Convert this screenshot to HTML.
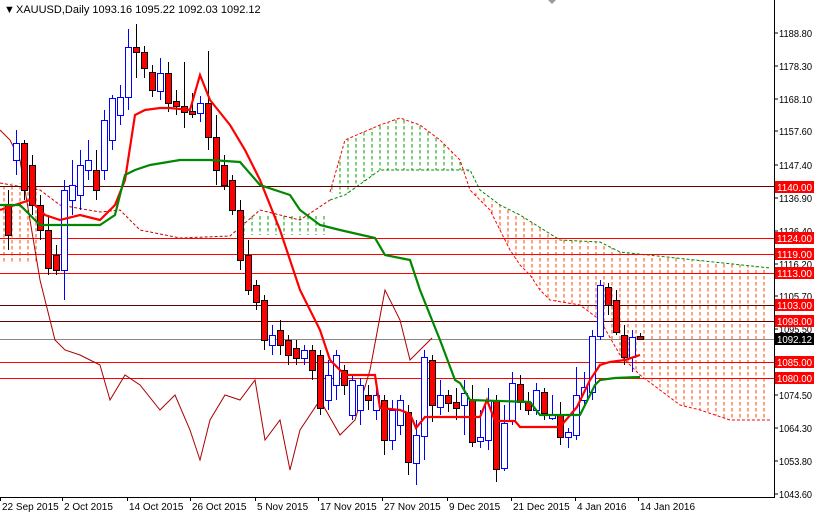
<!DOCTYPE html>
<html><head><meta charset="utf-8"><style>
html,body{margin:0;padding:0;background:#fff;}
svg{display:block;font-family:"Liberation Sans",sans-serif;}
</style></head><body>
<svg id="s" width="814" height="516" viewBox="0 0 814 516" xmlns="http://www.w3.org/2000/svg">
<defs>
<pattern id="po" width="8" height="6" patternUnits="userSpaceOnUse"><line x1="4" y1="0" x2="4" y2="3.5" stroke="#ff4500" stroke-width="1"/></pattern>
<pattern id="pg" width="8" height="6" patternUnits="userSpaceOnUse"><line x1="4" y1="0" x2="4" y2="3.5" stroke="#00a000" stroke-width="1"/></pattern>
</defs>
<rect width="814" height="516" fill="#fff"/>
<polygon fill="url(#po)" points="0,183 40,183 40,262 0,262"/>
<polygon fill="url(#pg)" points="330,192 345,140 380,125 400,118 420,125 440,140 460,160 470,175 470,170 380,170 345,195"/>
<polygon fill="url(#pg)" points="240,215 330,215 330,235 240,235"/>
<polygon fill="url(#po)" points="470,190 500,205 520,215 560,240 600,242 620,252 770,268 770,420 730,420 700,410 680,405 660,390 640,375 620,355 600,320 580,305 550,300 540,290 530,275 520,265 510,250 500,230 490,210"/>
<polyline fill="none" stroke="#f00" stroke-width="1" stroke-dasharray="3,2" points="330,192 345,140 380,125 400,118 420,125 440,140 460,160 470,190 490,210 500,230 510,250 520,265 530,275 540,290 550,300 580,305 600,320 620,355 640,375 660,390 680,405 700,410 730,420 770,420"/>
<polyline fill="none" stroke="#080" stroke-width="1" stroke-dasharray="3,2" points="330,200 345,195 380,170 470,170 480,190 500,205 520,215 560,240 600,242 620,252 770,268"/>
<polyline fill="none" stroke="#c00" stroke-width="1" stroke-dasharray="3,2" points="0,183 40,190 60,205 100,212 120,210 140,230 180,238 230,236 260,210 300,220 330,200"/>
<g stroke="#f00" stroke-width="1">
<line x1="0" y1="186.5" x2="774" y2="186.5" stroke="#600"/>
<line x1="0" y1="238.5" x2="774" y2="238.5"/>
<line x1="0" y1="254.5" x2="774" y2="254.5"/>
<line x1="0" y1="273.5" x2="774" y2="273.5"/>
<line x1="0" y1="305.5" x2="774" y2="305.5" stroke="#600"/>
<line x1="0" y1="321.5" x2="774" y2="321.5" stroke="#600"/>
<line x1="0" y1="362.5" x2="774" y2="362.5"/>
<line x1="0" y1="378.5" x2="774" y2="378.5"/>
</g>
<line x1="0" y1="339.5" x2="774" y2="339.5" stroke="#888"/>
<polyline fill="none" stroke="#a00" stroke-width="1" points="0,130 10,140 20,160 30,220 40,280 55,340 65,350 80,355 100,365 110,400 125,375 140,385 160,410 175,395 190,430 200,460 210,420 225,395 240,400 255,380 265,440 280,420 290,470 300,430 320,400 340,435 355,420 370,370 385,290 400,320 410,360 425,345 432,338"/>
<g id="candles"></g>
<polyline fill="none" stroke="#f00" stroke-width="2.2" points="0,210 30,200 45,215 60,220 80,215 100,220 115,205 125,180 135,115 145,110 160,108 170,108 190,110 200,75 210,100 230,125 245,150 260,180 280,230 290,260 300,290 320,330 330,360 345,375 375,375 380,408 400,410 410,414 416,428 425,417 480,417 487,400 495,421 515,421 520,427 560,427 577,407 590,380 600,365 610,362 625,360 640,355"/>
<polyline fill="none" stroke="#080" stroke-width="2.2" points="0,205 20,205 40,225 100,225 115,215 125,175 135,170 150,165 180,160 210,160 240,162 260,185 290,195 300,210 320,225 340,230 375,238 385,255 410,260 420,290 440,340 455,380 460,383 470,400 530,402 540,415 580,415 595,385 600,380 615,378 640,377"/>
<line x1="774.5" y1="0" x2="774.5" y2="497" stroke="#000"/>
<line x1="0" y1="497.5" x2="775" y2="497.5" stroke="#000"/>
<g font-size="10" fill="#000" id="ax"></g>
<g id="lbl" font-size="10"></g>
<text x="4" y="13" font-size="11">▼</text>
<text x="16" y="13" font-size="11" fill="#000">XAUUSD,Daily  1093.16 1095.22 1092.03 1092.12</text>
<polygon points="548,0 556,0 552,4" fill="#999"/>
</svg>
<script>
var C=[[8,'r',205,235,190,250],[16,'b',143,160,130,175],[24,'r',143,190,140,200],[32,'r',165,205,155,215],[40,'r',205,230,195,240],[48,'r',230,268,215,275],[56,'r',255,270,245,275],[64,'b',190,270,180,300],[72,'b',185,200,160,215],[80,'b',165,195,150,210],[88,'b',160,170,140,180],[96,'r',170,190,150,200],[104,'b',120,170,110,180],[112,'b',98,140,95,150],[120,'b',97,115,85,125],[128,'b',47,97,29,110],[136,'r',47,52,24,78],[144,'r',52,68,46,78],[152,'r',72,90,65,97],[160,'b',73,91,58,100],[168,'r',73,103,62,112],[176,'r',101,106,90,115],[184,'r',106,112,62,128],[192,'r',111,114,93,118],[200,'b',103,113,96,122],[208,'r',103,137,51,150],[216,'r',137,170,115,185],[224,'r',165,185,155,190],[232,'r',180,210,175,215],[240,'r',210,260,200,270],[248,'r',255,290,240,295],[256,'r',285,302,280,310],[264,'r',300,340,295,350],[272,'b',335,345,325,355],[280,'r',330,345,320,355],[288,'r',340,355,335,365],[296,'r',348,358,340,365],[304,'b',350,358,345,365],[312,'r',350,370,345,380],[320,'r',355,408,350,415],[328,'b',375,400,360,410],[336,'b',355,385,350,400],[344,'r',370,385,365,395],[352,'b',380,415,375,420],[360,'b',385,410,378,425],[368,'r',395,400,385,410],[376,'b',395,410,385,420],[384,'r',400,440,395,455],[392,'b',410,440,400,450],[400,'b',400,425,395,435],[408,'r',412,462,405,475],[416,'b',435,463,420,485],[424,'b',357,436,350,460],[432,'r',360,405,355,422],[440,'b',395,407,380,415],[448,'r',395,403,390,412],[456,'r',402,408,388,420],[464,'b',393,405,380,435],[472,'r',400,442,385,447],[480,'b',437,441,410,448],[488,'b',400,440,388,450],[496,'r',400,469,395,482],[504,'b',423,468,405,471],[512,'b',383,420,372,425],[520,'r',384,402,375,410],[528,'r',402,410,392,415],[536,'b',390,410,383,415],[544,'r',392,413,388,420],[552,'b',415,418,395,420],[560,'r',415,437,402,445],[568,'b',432,437,428,448],[576,'b',395,435,367,440],[584,'b',387,400,372,405],[592,'b',336,392,330,400],[600,'b',285,336,280,340],[608,'r',287,305,283,315],[616,'r',300,332,290,335],[624,'r',335,357,325,365],[632,'b',337,357,330,372],[640,'r',336,339,333,340]];
var g=document.getElementById('candles'),h='';
C.forEach(function(c){var x=c[0],b=c[1]=='b',col=b?'#00f':'#000';
h+='<line x1="'+(x+.5)+'" y1="'+c[4]+'" x2="'+(x+.5)+'" y2="'+c[5]+'" stroke="'+col+'"/>';
h+='<rect x="'+(x-2.5)+'" y="'+(c[2]+.5)+'" width="6" height="'+Math.max(1,c[3]-c[2])+'" fill="'+(b?'#fff':'#f00')+'" stroke="'+col+'"/>';});
g.innerHTML=h;
var T=[['1188.80',33],['1178.30',66],['1168.10',99],['1157.60',131],['1147.40',165],['1136.90',198],['1126.40',231],['1116.20',264],['1105.70',296],['1095.50',329],['1074.50',395],['1064.30',428],['1053.80',461],['1043.60',494]];
var a='';T.forEach(function(t){a+='<line x1="774" y1="'+t[1]+'" x2="778" y2="'+t[1]+'" stroke="#000"/><text x="779" y="'+(t[1]+4)+'" textLength="33" lengthAdjust="spacingAndGlyphs">'+t[0]+'</text>';});
var D=[['22 Sep 2015',0],['2 Oct 2015',62],['14 Oct 2015',127],['26 Oct 2015',190],['5 Nov 2015',255],['17 Nov 2015',318],['27 Nov 2015',382],['9 Dec 2015',447],['21 Dec 2015',511],['4 Jan 2016',575],['14 Jan 2016',638]];
D.forEach(function(d){a+='<line x1="'+(d[1]+.5)+'" y1="497" x2="'+(d[1]+.5)+'" y2="501" stroke="#000"/><text x="'+(d[1]+2)+'" y="510">'+d[0]+'</text>';});
document.getElementById('ax').innerHTML=a;
var L=[['1140.00',187,'#f00'],['1124.00',238,'#f00'],['1119.00',254,'#f00'],['1113.00',273,'#f00'],['1103.00',305,'#f00'],['1098.00',321,'#f00'],['1092.12',339,'#000'],['1085.00',362,'#f00'],['1080.00',378,'#f00']];
var l='';L.forEach(function(t){l+='<rect x="775" y="'+(t[1]-6)+'" width="39" height="12" fill="'+t[2]+'"/><text x="777" y="'+(t[1]+4)+'" fill="#fff" textLength="35" lengthAdjust="spacingAndGlyphs">'+t[0]+'</text>';});
document.getElementById('lbl').innerHTML=l;
</script>
</body></html>
